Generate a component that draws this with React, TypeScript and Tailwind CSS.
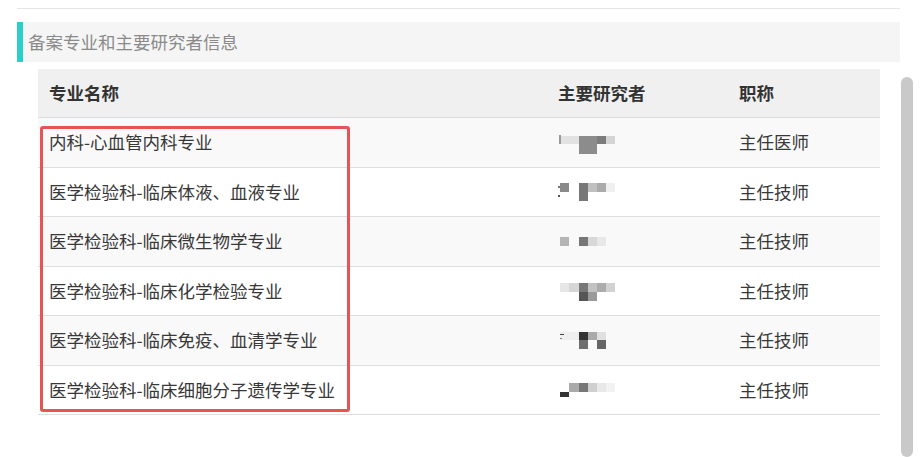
import React from "react";

type Block = [number, number, number, number, string];

const rows: { name: string; title: string; blocks: Block[] }[] = [
  {
    name: "内科-心血管内科专业",
    title: "主任医师",
    blocks: [
      [1, 17, 2, 9, "#9a9a9a"],
      [3, 18, 18, 8, "#e2e2e2"],
      [21, 18, 18, 18, "#8c8c8c"],
      [39, 18, 9, 8, "#7c7c7c"],
      [48, 18, 9, 8, "#d4d4d4"],
    ],
  },
  {
    name: "医学检验科-临床体液、血液专业",
    title: "主任技师",
    blocks: [
      [2, 15, 9, 9, "#8a8a8a"],
      [0, 18, 2, 2, "#777"],
      [0, 27, 2, 2, "#555"],
      [21, 15, 9, 18, "#777"],
      [30, 15, 9, 9, "#c0c0c0"],
      [39, 15, 9, 9, "#ababab"],
      [48, 15, 9, 9, "#f0f0f0"],
    ],
  },
  {
    name: "医学检验科-临床微生物学专业",
    title: "主任技师",
    blocks: [
      [2, 20, 9, 9, "#b5b5b5"],
      [21, 20, 9, 9, "#777"],
      [30, 20, 9, 9, "#d8d8d8"],
      [39, 20, 9, 9, "#e8e8e8"],
    ],
  },
  {
    name: "医学检验科-临床化学检验专业",
    title: "主任技师",
    blocks: [
      [2, 16, 9, 9, "#e6e6e6"],
      [11, 16, 10, 9, "#d6d6d6"],
      [21, 16, 9, 9, "#777"],
      [30, 16, 9, 9, "#c2c2c2"],
      [39, 16, 9, 9, "#acacac"],
      [48, 16, 9, 9, "#d2d2d2"],
      [21, 25, 9, 9, "#555"],
      [30, 25, 9, 9, "#9a9a9a"],
    ],
  },
  {
    name: "医学检验科-临床免疫、血清学专业",
    title: "主任技师",
    blocks: [
      [2, 16, 19, 8, "#efefef"],
      [2, 18, 4, 1, "#444"],
      [2, 22, 2, 1, "#888"],
      [21, 16, 9, 8, "#333"],
      [30, 16, 9, 8, "#aaa"],
      [39, 16, 9, 8, "#e0e0e0"],
      [21, 24, 9, 9, "#6e6e6e"],
      [39, 24, 9, 9, "#666"],
    ],
  },
  {
    name: "医学检验科-临床细胞分子遗传学专业",
    title: "主任技师",
    blocks: [
      [11, 17, 10, 9, "#aaa"],
      [21, 17, 9, 9, "#777"],
      [30, 17, 9, 9, "#cfcfcf"],
      [39, 17, 9, 9, "#e8e8e8"],
      [48, 17, 9, 9, "#f2f2f2"],
      [2, 26, 9, 5, "#333"],
    ],
  },
];

function Blur({ blocks }: { blocks: Block[] }) {
  return (
    <svg width="60" height="49" viewBox="0 0 60 49" className="block">
      {blocks.map((b, i) => (
        <rect key={i} x={b[0]} y={b[1]} width={b[2]} height={b[3]} fill={b[4]} />
      ))}
    </svg>
  );
}

export default function App() {
  return (
    <div
      className="relative w-[922px] h-[457px] bg-white overflow-hidden flex"
      style={{ fontFamily: '"Noto Sans CJK SC", "Noto Sans", sans-serif' }}
    >
      <div className="w-[900px] pl-[17px] pt-[8px]">
        <div className="h-px bg-[#e6e6e6]" />
        <div className="mt-[13px] h-[40px] bg-[#f5f5f5] border-l-[6px] border-[#2ccfc8] flex items-center pl-[5px]">
          <span className="text-[17.5px] text-[#8a8a8a] leading-none">备案专业和主要研究者信息</span>
        </div>
        <div className="mt-[7px] ml-[21px] w-[842px]">
          <div className="flex h-[49px] bg-[#f0f0f0] border-b border-[#dcdcdc] items-center text-[17.5px] font-bold text-[#333]">
            <div className="w-[509px] pl-[11px]">专业名称</div>
            <div className="w-[181px] pl-[11px]">主要研究者</div>
            <div className="w-[152px] pl-[11px]">职称</div>
          </div>
          {rows.map((r, i) => (
            <div
              key={i}
              className={`flex h-[49.5px] border-b border-[#dedede] items-center text-[17.5px] text-[#383838] ${
                i % 2 === 0 ? "bg-[#f9f9f9]" : "bg-white"
              }`}
            >
              <div className="w-[509px] pl-[11px]">{r.name}</div>
              <div className="w-[181px] pl-[11px] self-start">
                <Blur blocks={r.blocks} />
              </div>
              <div className="w-[152px] pl-[11px]">{r.title}</div>
            </div>
          ))}
        </div>
      </div>
      <div className="ml-[1px] mt-[77px] w-[12px] h-[380px] rounded-[6px] bg-[#c9c9c9]" />
      <div className="absolute left-[40px] top-[126px] w-[310px] h-[286px] border-[3px] border-[#e65454] rounded-[3px] pointer-events-none" />
    </div>
  );
}
